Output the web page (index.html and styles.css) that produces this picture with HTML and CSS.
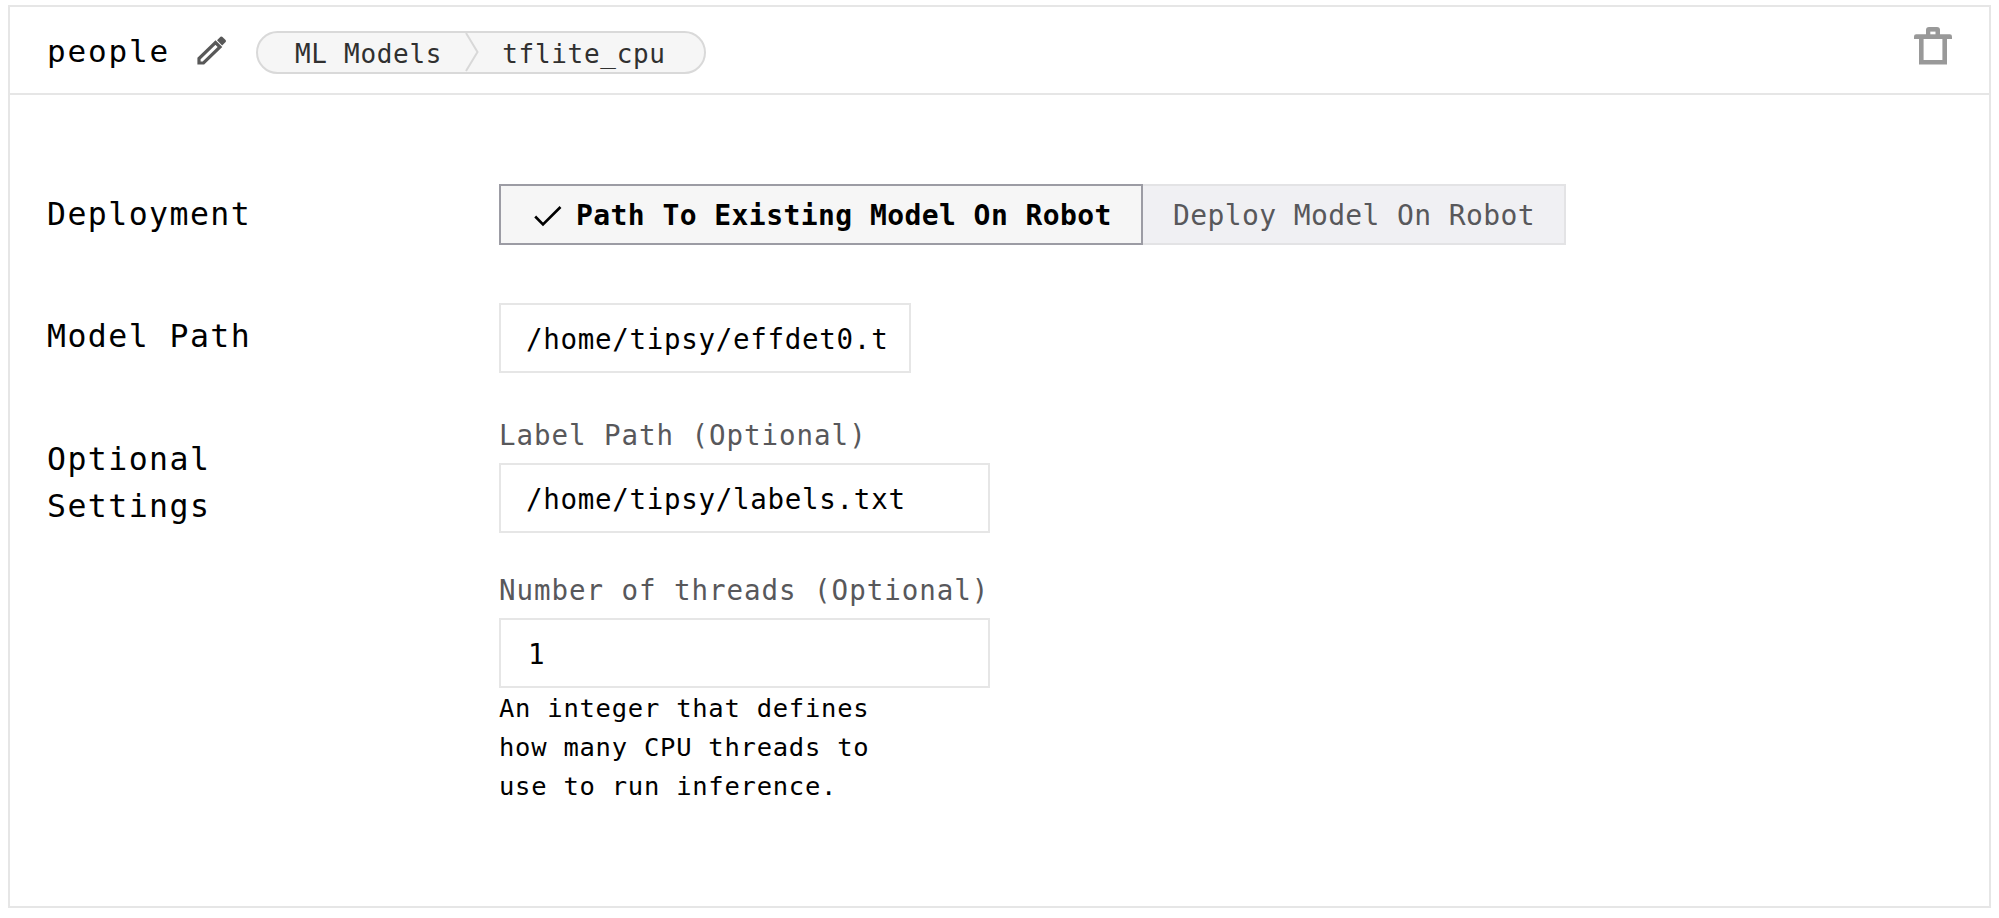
FILE: index.html
```html
<!DOCTYPE html>
<html lang="en">
<head>
<meta charset="utf-8">
<title>people</title>
<link rel="stylesheet" href="styles.css">
</head>
<body>
<main class="card">
  <header class="card-header">
    <h1 class="name">people</h1>
    <svg class="pencil" viewBox="0 0 30 30" fill="none" stroke="#585858" stroke-width="3.2">
      <path d="M2 27V22.5L18.5 6.5L23 11L6.5 27Z"/>
      <path d="M20 4.3L23.5 .8Q24.5 0 25.5 .9L28.6 4Q29.5 5 28.6 6L25.1 9.5Z" fill="#585858" stroke="none"/>
    </svg>
    <div class="crumbs">
      <span class="crumb">ML Models</span>
      <svg class="chevron" viewBox="0 0 14 40" fill="none" stroke="#d8d8d8" stroke-width="2"><path d="M1 0L12.5 19L1 38"/></svg>
      <span class="crumb">tflite_cpu</span>
    </div>
    <svg class="trash" viewBox="0 0 38 38" fill="none" stroke="#999" stroke-width="4.6">
      <path d="M7.3 10V35.3H30.7V10"/>
      <path d="M0 12V9.5Q0 7.3 2.2 7.3H35.8Q38 7.3 38 9.5V12Z" fill="#999" stroke="none"/>
      <path d="M12 8V3Q12 0 15 0H23Q26 0 26 3V8Z" fill="#999" stroke="none"/>
      <path d="M16.3 4.6H21.5V7.3H16.3Z" fill="#fff" stroke="none"/>
    </svg>
  </header>
  <section class="card-body">
    <div class="row deployment">
      <div class="row-label">Deployment</div>
      <div class="toggle">
        <button class="option selected">
          <svg class="check" viewBox="0 0 28 22" fill="none" stroke="#000" stroke-width="2.6"><path d="M1.2 11.5L9 19.5L26.5 2"/></svg>
          <span>Path To Existing Model On Robot</span>
        </button>
        <button class="option">Deploy Model On Robot</button>
      </div>
    </div>
    <div class="row model">
      <div class="row-label">Model Path</div>
      <div class="input short">/home/tipsy/effdet0.t</div>
    </div>
    <div class="row optional">
      <div class="row-label">Optional<br>Settings</div>
      <div class="fields">
        <div class="field">
          <div class="field-label">Label Path (Optional)</div>
          <div class="input">/home/tipsy/labels.txt</div>
        </div>
        <div class="field">
          <div class="field-label">Number of threads (Optional)</div>
          <div class="input number">1</div>
          <p class="help">An integer that defines<br>how many CPU threads to<br>use to run inference.</p>
        </div>
      </div>
    </div>
  </section>
</main>
</body>
</html>
```
FILE: styles.css
```css
* { box-sizing: border-box; }
body {
  margin: 0;
  padding: 5px 8px 0;
  background: #fff;
  color: #000;
  font-family: "DejaVu Sans Mono", monospace;
}
.card {
  width: 1983px;
  height: 903px;
  border: 2px solid #e6e6e6;
}
.card-header {
  display: flex;
  align-items: flex-start;
  height: 88px;
  padding: 0 37px;
  border-bottom: 2px solid #e6e6e6;
}
.name {
  margin: 21px 0 0;
  width: 124px;
  font-size: 31px;
  font-weight: 400;
  line-height: 47px;
  letter-spacing: 1.84px;
}
.pencil {
  width: 30px;
  height: 30px;
  margin: 29px 0 0 26px;
}
.crumbs {
  display: flex;
  width: 450px;
  height: 43px;
  margin: 24px 0 0 29px;
  padding-left: 37px;
  border: 2px solid #d9d9d9;
  border-radius: 22px;
  background: #f6f6f6;
}
.crumb {
  color: #303030;
  font-size: 26px;
  line-height: 42px;
  letter-spacing: .7px;
  white-space: nowrap;
}
.chevron {
  width: 14px;
  height: 40px;
  margin: 0 23px;
}
.trash {
  width: 38px;
  height: 38px;
  margin: 20px 0 0 auto;
}
.card-body { padding: 89px 0 0 37px; }
.row {
  display: grid;
  grid-template-columns: 452px auto;
  justify-content: start;
}
.row-label {
  font-size: 31.5px;
  line-height: 47px;
  letter-spacing: 1.45px;
}
.deployment { height: 119px; }
.deployment .row-label { padding-top: 7px; }
.toggle { display: flex; }
.option {
  display: flex;
  align-items: center;
  height: 61px;
  width: 423px;
  padding: 3px 0 0 30px;
  border: 2px solid #e3e3e5;
  border-left: 0;
  background: #f0f0f3;
  color: #58585b;
  font: 28px/40px "DejaVu Sans Mono", monospace;
  letter-spacing: .38px;
  white-space: nowrap;
}
.selected {
  width: 644px;
  padding-left: 33px;
  border: 2px solid #9c9ca4;
  background: #f6f6f6;
  color: #000;
  font-weight: 700;
  letter-spacing: .43px;
}
.check {
  width: 28px;
  height: 22px;
  margin-right: 14px;
}
.model { height: 112px; }
.model .row-label { padding-top: 10px; }
.input {
  width: 491px;
  height: 70px;
  padding: 1px 0 0 25px;
  border: 2px solid #e6e6e6;
  font-size: 27.5px;
  line-height: 66px;
  letter-spacing: .7px;
  white-space: nowrap;
}
.short { width: 412px; }
.number { padding-left: 27px; }
.optional .row-label { padding-top: 21px; }
.field { height: 155px; }
.field-label {
  height: 48px;
  color: #58585b;
  font-size: 27.5px;
  line-height: 40px;
  letter-spacing: .95px;
  white-space: nowrap;
}
.help {
  margin: 1px 0 0;
  font-size: 25.5px;
  line-height: 39.2px;
  letter-spacing: .75px;
}
```
